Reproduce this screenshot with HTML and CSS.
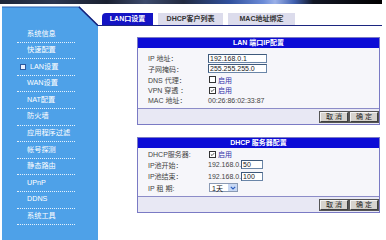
FILE: index.html
```html
<!DOCTYPE html>
<html lang="zh-CN">
  <head>
    <meta charset="UTF-8" />
    <title>LAN口设置</title>
    <link rel="stylesheet" href="styles.css">
  </head>
  <body>
    <div class="banner"></div>

    <div class="page">
      <div class="sidebar">
        <svg class="side-top" width="96" height="20" viewBox="0 0 96 20">
          <path d="M0 1 H78 L96 19 V20 H0 Z" fill="#4ea1e8" />
          <path d="M0 1 H78" fill="none" stroke="#2f62b0" stroke-width="1" />
          <path d="M77 1 L96 19.5" fill="none" stroke="#16207a" stroke-width="1.6" />
        </svg>
        <ul class="menu">
          <li>系统信息</li>
          <li>快速配置</li>
          <li class="current"><span class="bullet"></span>LAN设置</li>
          <li>WAN设置</li>
          <li>NAT配置</li>
          <li>防火墙</li>
          <li>应用程序过滤</li>
          <li>帐号探测</li>
          <li>静态路由</li>
          <li>UPnP</li>
          <li>DDNS</li>
          <li>系统工具</li>
        </ul>
      </div>

      <div class="content">
        <div class="tabs">
          <div class="tab active tab-lan">LAN口设置</div>
          <div class="tab tab-dhcp">DHCP客户列表</div>
          <div class="tab tab-mac">MAC地址绑定</div>
        </div>

        <div class="panels">
          <div class="panel panel-lan">
            <div class="panel-head">LAN 端口IP配置</div>
            <div class="panel-body">
              <div class="row">
                <span class="label">IP 地址：</span>
                <span class="field wide">192.168.0.1</span>
              </div>
              <div class="row tall">
                <span class="label">子网掩码：</span>
                <span class="field wide">255.255.255.0</span>
              </div>
              <div class="row tall">
                <span class="label">DNS 代理：</span>
                <span class="check"></span><span class="check-text">启用</span>
              </div>
              <div class="row">
                <span class="label">VPN 穿透 ：</span>
                <span class="check">
                  <svg width="7" height="7" viewBox="0 0 7 7"><path d="M1.2 3.4 L2.8 5 L5.8 1.6" fill="none" stroke="#222" stroke-width="1.1" /></svg>
                </span><span class="check-text">启用</span>
              </div>
              <div class="row">
                <span class="label">MAC 地址：</span>
                <span class="value">00:26:86:02:33:87</span>
              </div>
            </div>
            <div class="panel-foot">
              <button class="btn">取 消</button>
              <button class="btn">确 定</button>
            </div>
          </div>

          <div class="panel panel-dhcp">
            <div class="panel-head">DHCP 服务器配置</div>
            <div class="panel-body">
              <div class="row">
                <span class="label">DHCP服务器:</span>
                <span class="check">
                  <svg width="7" height="7" viewBox="0 0 7 7"><path d="M1.2 3.4 L2.8 5 L5.8 1.6" fill="none" stroke="#222" stroke-width="1.1" /></svg>
                </span><span class="check-text">启用</span>
              </div>
              <div class="row tall">
                <span class="label">IP池开始：</span>
                <span class="value">192.168.0.</span><span class="field short">50</span>
              </div>
              <div class="row tall">
                <span class="label">IP池结束：</span>
                <span class="value">192.168.0.</span><span class="field short">100</span>
              </div>
              <div class="row tall">
                <span class="label">IP 租 期:</span>
                <span class="select">1天<span class="select-arrow">
                  <svg width="6" height="4" viewBox="0 0 6 4"><path d="M0.8 0.8 L3 3 L5.2 0.8" fill="none" stroke="#2d5fc0" stroke-width="1.2" /></svg>
                </span></span>
              </div>
            </div>
            <div class="panel-foot">
              <button class="btn">取 消</button>
              <button class="btn">确 定</button>
            </div>
          </div>
        </div>
      </div>
    </div>
  </body>
</html>
```

FILE: styles.css
```css
body {
  font-family: 'Liberation Sans', 'Noto Sans CJK SC', sans-serif;
  background-color: #fff;
  margin: 0;
  padding: 0;
  width: 386px;
  height: 240px;
  overflow: hidden;
  font-size: 7px;
  color: #333;
}

.banner {
  width: 382px;
  height: 4px;
  background: linear-gradient(90deg, #1e2638 0%, #2c3650 14%, #1a2030 28%, #3c4a6c 38%, #222a40 48%,
    #2f4f9c 60%, #6c8cd8 69%, #9ab0e8 72%, #4060b0 77%, #121624 82%, #000 100%);
}

.page {
  display: flex;
  height: 234px;
  margin-top: 2px;
}

/* left menu */
.sidebar {
  width: 96px;
  margin-left: 2px;
  display: flex;
  flex-direction: column;
}

.side-top {
  display: block;
}

.menu {
  flex: 1;
  list-style-type: none;
  margin: 0;
  padding: 0 0 0 15px;
  background-color: #4ea1e8;
}

.menu li {
  width: 58px;
  height: 16.6px;
  line-height: 16.6px;
  padding-left: 10px;
  box-sizing: border-box;
  border-bottom: 1px dotted rgba(255, 255, 255, 0.85);
  color: #fff;
  font-size: 7.2px;
  white-space: nowrap;
  display: flex;
  align-items: center;
}

.menu li.current {
  padding-left: 3px;
}

.bullet {
  width: 4px;
  height: 4px;
  background-color: #e8f0ff;
  border: 1px solid #2a5aa0;
  margin-right: 4px;
}

/* tabs */
.content {
  flex: 1;
  display: flex;
  flex-direction: column;
}

.tabs {
  display: flex;
  padding: 7px 0 0 4px;
  width: 280px;
  border-bottom: 1px solid #1c2680;
}

.tab {
  height: 12px;
  line-height: 12px;
  text-align: center;
  font-weight: bold;
  background-color: #dcdcec;
  color: #333;
  margin-right: 5px;
}

.tab.active {
  background-color: #1414c4;
  color: #fff;
  border-radius: 4px 0 0 0;
}

.tab-lan { width: 51px; }
.tab-dhcp { width: 65px; }
.tab-mac { width: 67px; }

/* panels */
.panels {
  padding: 11px 0 0 39px;
}

.panel {
  width: 243px;
  box-sizing: border-box;
  border: 1px solid #7a7ac4;
  background-color: #f6f6fa;
}

.panel-dhcp {
  margin-top: 12px;
}

.panel-head {
  height: 10px;
  line-height: 10px;
  background-color: #0c0cd6;
  color: #fff;
  font-weight: bold;
  text-align: center;
}

.panel-lan .panel-body {
  padding: 5px 0 3px 0;
}

.panel-dhcp .panel-body {
  padding: 1px 0 2px 0;
}

.row {
  display: flex;
  align-items: center;
  height: 10px;
}

.row.tall {
  height: 11px;
}

.panel-dhcp .row.tall {
  height: 11.6px;
}

.label {
  width: 70px;
  padding-left: 10px;
  box-sizing: border-box;
  color: #444;
}

.value {
  color: #444;
}

.field {
  height: 9px;
  line-height: 8px;
  box-sizing: border-box;
  border: 1px solid #6a86a8;
  border-top-color: #3e5a7c;
  border-left-color: #3e5a7c;
  background-color: #fff;
  padding-left: 1px;
  color: #222;
}

.field.wide {
  width: 59px;
}

.field.short {
  width: 22px;
}

.check {
  width: 7px;
  height: 7px;
  box-sizing: border-box;
  border: 1px solid #333;
  background-color: #fff;
  display: flex;
  align-items: center;
  justify-content: center;
  margin-left: 1px;
}

.check svg {
  display: block;
}

.check-text {
  color: #3030a8;
  margin-left: 2px;
}

.select {
  width: 29px;
  height: 9px;
  box-sizing: border-box;
  border: 1px solid #8a9ab4;
  background-color: #fff;
  display: flex;
  align-items: center;
  justify-content: space-between;
  padding-left: 2px;
  color: #222;
  margin-left: 1px;
}

.select-arrow {
  width: 9px;
  height: 7px;
  background-color: #c8d8f4;
  display: flex;
  align-items: center;
  justify-content: center;
}

.panel-foot {
  display: flex;
  justify-content: flex-end;
  gap: 2px;
  padding: 3px 1px 2px 0;
  border-top: 1px solid #8c8cc8;
  background-color: #e8e8f4;
}

.btn {
  width: 28px;
  height: 10px;
  padding: 0;
  font-family: inherit;
  font-size: 7px;
  line-height: 8px;
  color: #222;
  background-color: #d6d3ce;
  border: 1px solid;
  border-color: #f4f4f4 #404040 #404040 #f4f4f4;
  outline: 1px solid #555;
  outline-offset: 0;
}
```
